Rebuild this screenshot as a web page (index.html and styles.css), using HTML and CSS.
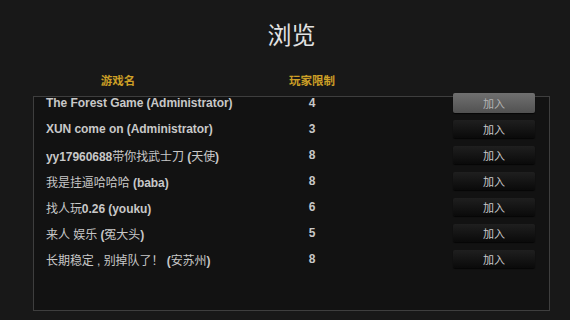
FILE: index.html
```html
<!DOCTYPE html>
<html lang="zh">
<head>
<meta charset="utf-8">
<title>浏览</title>
<link rel="stylesheet" href="styles.css">
</head>
<body>
<div class="page">
  <h1 class="title">浏览</h1>
  <div class="grid header">
    <div class="hdr-name">游戏名</div>
    <div class="hdr-num">玩家限制</div>
  </div>
  <div class="panel">
    <div class="list">
      <div class="grid row">
        <div class="name">The Forest Game (Administrator)</div>
        <div class="num">4</div>
        <div></div>
        <div class="btn btn-hover">加入</div>
      </div>
      <div class="grid row">
        <div class="name">XUN come on (Administrator)</div>
        <div class="num">3</div>
        <div></div>
        <div class="btn">加入</div>
      </div>
      <div class="grid row">
        <div class="name">yy17960688<span class="zh">带你找武士刀</span> (<span class="zh">天使</span>)</div>
        <div class="num">8</div>
        <div></div>
        <div class="btn">加入</div>
      </div>
      <div class="grid row">
        <div class="name"><span class="zh">我是挂逼哈哈哈</span> (baba)</div>
        <div class="num">8</div>
        <div></div>
        <div class="btn">加入</div>
      </div>
      <div class="grid row">
        <div class="name"><span class="zh">找人玩</span>0.26 (youku)</div>
        <div class="num">6</div>
        <div></div>
        <div class="btn">加入</div>
      </div>
      <div class="grid row">
        <div class="name"><span class="zh">来人 娱乐</span> (<span class="zh">冤大头</span>)</div>
        <div class="num">5</div>
        <div></div>
        <div class="btn">加入</div>
      </div>
      <div class="grid row">
        <div class="name"><span class="zh">长期稳定 , 别掉队了！</span> (<span class="zh">安苏州</span>)</div>
        <div class="num">8</div>
        <div></div>
        <div class="btn">加入</div>
      </div>
    </div>
  </div>
</div>
</body>
</html>
```
FILE: styles.css
```css
html, body {
  margin: 0;
  padding: 0;
  width: 570px;
  height: 320px;
  overflow: hidden;
  background: #181818;
  font-family: "Liberation Sans", "Noto Sans CJK SC", sans-serif;
}

.page {
  width: 517px;
  padding: 18px 0 0 33px;
}

.title {
  margin: 0;
  height: 32px;
  line-height: 32px;
  text-align: center;
  font-family: "Noto Sans CJK SC", sans-serif;
  font-weight: normal;
  font-size: 24px;
  color: #e2e2e2;
}

.grid {
  display: grid;
  grid-template-columns: 244px 44px 1fr 82px;
  align-items: center;
}

.header {
  margin-top: 22px;
  padding: 0 14px 0 13px;
  height: 16px;
  font-family: "Noto Sans CJK SC", sans-serif;
  font-weight: bold;
  font-size: 11.5px;
  line-height: 16px;
  color: #cc9f26;
}

.hdr-name {
  width: 144px;
  text-align: center;
}

.hdr-num {
  justify-self: center;
  white-space: nowrap;
}

.panel {
  margin-top: 8px;
  height: 215px;
  box-sizing: border-box;
  border: 1px solid #3e3e3e;
  background: #121212;
  padding: 0 14px 0 12px;
}

.list {
  margin-top: -7px;
}

.row {
  height: 26px;
  font-size: 12px;
  font-weight: bold;
  color: #c8c8c8;
}

.name {
  white-space: nowrap;
  letter-spacing: -0.05px;
}

.zh {
  font-weight: normal;
}

.num {
  text-align: center;
}

.btn {
  height: 18px;
  line-height: 18px;
  border-radius: 2px;
  background: linear-gradient(#1f1f1f, #0a0a0a);
  box-shadow: 0 1px 1px rgba(0, 0, 0, 0.7);
  text-align: center;
  font-family: "Noto Sans CJK SC", sans-serif;
  font-weight: normal;
  font-size: 11px;
  color: #cacaca;
}

.btn-hover {
  height: 20px;
  line-height: 20px;
  background: linear-gradient(#707070, #515151);
  color: #b4b4b4;
}
```
